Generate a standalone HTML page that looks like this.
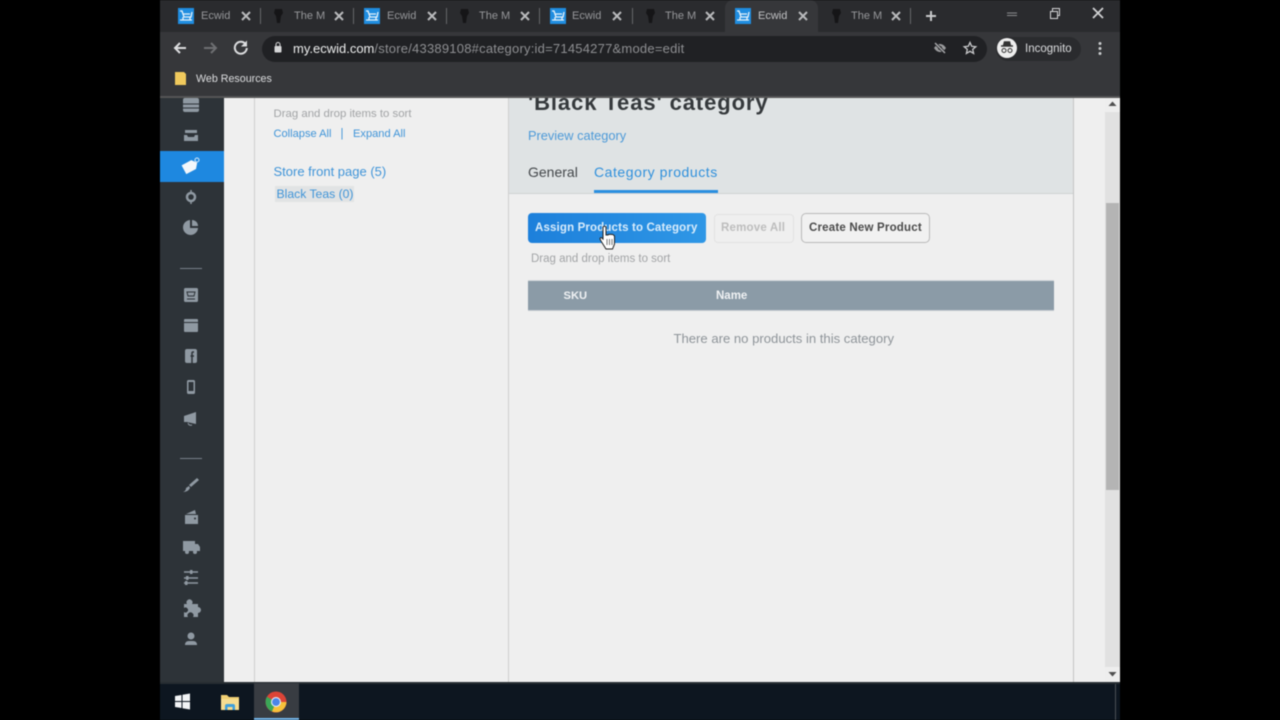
<!DOCTYPE html>
<html><head><meta charset="utf-8"><style>
html,body{margin:0;padding:0;background:#000;width:1280px;height:720px;overflow:hidden}
body{font-family:"Liberation Sans",sans-serif;position:relative}
div,span,svg{position:absolute}
.t{white-space:nowrap;line-height:1}
#all{left:0;top:0;width:1280px;height:720px;filter:blur(.4px)}
</style></head><body><div id="all">
<!-- chrome -->
<div style="left:160px;top:0;width:960px;height:32px;background:#2a2b2e"></div>
<div style="left:160px;top:32px;width:960px;height:64px;background:#36373a"></div>
<div style="left:160px;top:96px;width:960px;height:2px;background:#555"></div>
<div style="left:725px;top:0;width:93px;height:32px;background:#36373a;border-radius:8px 8px 0 0"></div>

<svg style="left:160px;top:0" width="960" height="96" viewBox="160 0 960 96">
<defs><g id="e"><rect x="-8" y="-8" width="16" height="16" fill="#1f8de0"/><path d="M-6-5h2l2 6h7l1-5M-3 1v3M4 1v3M-6 4h12M-3-2h7" stroke="#e6f2fb" stroke-width="1.3" fill="none"/></g>
<g id="m"><path d="M-4-7h7l1 4-2 3-1 7h-3l-1-7-2-3z" fill="#151517"/></g>
<path id="x" d="M-4-4L4 4M4-4L-4 4" stroke="#b8b9bb" stroke-width="2"/></defs>
<use href="#e" x="186" y="16"/><use href="#m" x="279" y="16"/><use href="#e" x="372" y="16"/><use href="#m" x="465" y="16"/><use href="#e" x="558" y="16"/><use href="#m" x="651" y="16"/><use href="#e" x="743" y="16"/><use href="#m" x="837" y="16"/>
<use href="#x" x="246" y="16"/><use href="#x" x="339" y="16"/><use href="#x" x="432" y="16"/><use href="#x" x="525" y="16"/><use href="#x" x="617" y="16"/><use href="#x" x="710" y="16"/><use href="#x" x="803" y="16"/><use href="#x" x="896" y="16"/>
<path d="M260.500 8v16M353.500 8v16M446.500 8v16M539.500 8v16M632.500 8v16M910.500 8v16" stroke="#66676a"/>
<path d="M926 16h10M931 11v10" stroke="#c8c9cb" stroke-width="2"/>
<path d="M1007 13h10M1007 15.500h10" stroke="#8a8b8d" stroke-width="1"/>
<path d="M1050.500 11.500h7v7h-7zM1052.500 11v-2.500h7v7H1057.500" stroke="#d5d6d7" fill="none"/>
<path d="M1093 8l10 10M1103 8l-10 10" stroke="#d0d1d2" stroke-width="1.800"/>
<path d="M186 48h-11M180 43l-5 5 5 5" stroke="#dcdddf" stroke-width="2" fill="none"/>
<path d="M204 48h11M211 43l5 5-5 5" stroke="#6e6f72" stroke-width="2" fill="none"/>
<path d="M245.500 44a6 6 0 1 0 1.300 4" stroke="#dcdddf" stroke-width="2" fill="none"/><path d="M247 40.500v6h-6z" fill="#dcdddf"/>
<rect x="262" y="36" width="725" height="26" rx="13" fill="#202124"/>
<rect x="274.500" y="46" width="7" height="6.500" rx="1" fill="#d5d6d7"/><path d="M276 46v-1.500a2 2 0 0 1 4 0V46" stroke="#d5d6d7" fill="none"/>
<path d="M934 48c2-3 4-4 6-4s4 1 6 4c-2 3-4 4-6 4s-4-1-6-4z" fill="#9a9b9d"/><circle cx="940" cy="48" r="2" fill="#202124"/><path d="M935 43l10 10" stroke="#202124" stroke-width="3"/><path d="M935 43l10 10" stroke="#aaabad" stroke-width="1.400"/>
<path d="M970 42.500l1.700 3.800 4.100.4-3.100 2.700.9 4-3.600-2.100-3.600 2.100.9-4-3.100-2.700 4.100-.4z" fill="none" stroke="#c8c9cb" stroke-width="1.300"/>
<rect x="996" y="37" width="85" height="24" rx="12" fill="#2a2b2e"/>
<circle cx="1007" cy="48" r="10" fill="#eeeeee"/><path d="M1001 46h12M1003.500 46l1-4h5l1 4" stroke="#333" stroke-width="1.500" fill="#333"/><circle cx="1004" cy="50.500" r="2" fill="none" stroke="#333"/><circle cx="1010" cy="50.500" r="2" fill="none" stroke="#333"/>
<circle cx="1100" cy="43.500" r="1.500" fill="#c8c9cb"/><circle cx="1100" cy="48.500" r="1.500" fill="#c8c9cb"/><circle cx="1100" cy="53.500" r="1.500" fill="#c8c9cb"/>
<path d="M175 72h9l2 2v11h-11z" fill="#f0c95c"/>
</svg>

<span class="t" style="left:201px;top:10.500px;font-size:11px;color:#96979a">Ecwid</span>
<span class="t" style="left:294px;top:10.500px;font-size:11px;color:#96979a">The M</span>
<span class="t" style="left:387px;top:10.500px;font-size:11px;color:#96979a">Ecwid</span>
<span class="t" style="left:479px;top:10.500px;font-size:11px;color:#96979a">The M</span>
<span class="t" style="left:572px;top:10.500px;font-size:11px;color:#96979a">Ecwid</span>
<span class="t" style="left:665px;top:10.500px;font-size:11px;color:#96979a">The M</span>
<span class="t" style="left:758px;top:10.500px;font-size:11px;color:#c0c1c3">Ecwid</span>
<span class="t" style="left:851px;top:10.500px;font-size:11px;color:#96979a">The M</span>
<span class="t" style="left:293px;top:42px;font-size:13px;color:#8e8f92"><span style="position:static;color:#eceded">my.ecwid.com</span><span style="position:static;letter-spacing:.22px">/store/43389108#category:id=71454277&amp;mode=edit</span></span>
<span class="t" style="left:1025px;top:43.500px;font-size:11.500px;color:#dcdddf">Incognito</span>
<span class="t" style="left:196px;top:73.500px;font-size:10.700px;color:#dcdddf">Web Resources</span>

<!-- sidebar -->
<div style="left:160px;top:98px;width:64px;height:584px;background:#2d3338"></div>
<div style="left:160px;top:151px;width:64px;height:31px;background:#1e88e0"></div>
<svg style="left:160px;top:98px" width="64" height="584" viewBox="160 98 64 584">
<g fill="#8f99a2">
<rect x="183" y="98" width="16" height="14" rx="2"/><path d="M183 104h16" stroke="#2d3338"/><path d="M183 108h16" stroke="#2d3338"/>
<path d="M185 130h12v3h-12zM184 135h3l1 2h6l1-2h3v6h-14z"/>
<circle cx="191" cy="197" r="4" fill="none" stroke="#8f99a2" stroke-width="2.500"/><path d="M191 190v3M191 201v3" stroke="#8f99a2" stroke-width="1.500"/>
<path d="M190 220a7.500 7.500 0 1 0 8 8h-8z"/><path d="M192 220a6 6 0 0 1 6 6h-6z"/>
<rect x="184" y="288" width="14" height="14" rx="1.500"/><path d="M187 292h8l-1 4h-6zM187 299h8" stroke="#2d3338" fill="none"/>
<rect x="184" y="319" width="14" height="13" rx="1"/><path d="M184 322.500h14" stroke="#2d3338"/>
<rect x="185" y="349" width="12" height="14" rx="2"/><path d="M192 363v-7h2M194 352h-1q-1 0-1 1v3h-1.500" stroke="#2d3338" stroke-width="1.500" fill="none"/>
<rect x="187" y="380" width="8" height="14" rx="1.500"/><rect x="188.500" y="382" width="5" height="9" fill="#2d3338"/>
<path d="M184 416l12-4v12l-9-2h-3z"/><path d="M188 423q1 3 4 2" stroke="#8f99a2" fill="none"/>
<path d="M197 478l2 2-8 7-2-2z"/><path d="M189 486l1 2q-2 4-7 4 3-1 3-4z" fill="#8f99a2"/>
<path d="M185 515h13v9h-13zM186 514l9-4 1 4z"/><circle cx="195" cy="518.500" r="1" fill="#2d3338"/>
<rect x="183" y="541" width="12" height="9"/><path d="M195 544h3l2 3v4h-17v-1h12z"/><circle cx="187" cy="552" r="2"/><circle cx="195" cy="552" r="2"/>
<path d="M184 572h14M184 578h14M184 583h14" stroke="#8f99a2" stroke-width="1.500"/><rect x="190" y="570" width="2.500" height="4"/><rect x="186" y="576" width="2.500" height="4"/><rect x="185" y="581" width="2.500" height="4"/>
<path d="M184 604h3a3 3 0 1 1 5 0h6v3a3 3 0 1 1 0 6v4h-5a3 3 0 1 0-5 0h-4v-5a2.500 2.500 0 1 0 0-4z"/>
<circle cx="191" cy="636" r="3.500"/><path d="M185 645q0-4 4-4h4q4 0 4 4z"/>
</g>
<path d="M180 268.500h22M180 458.500h22" stroke="#78818a"/>
<g transform="rotate(-28 191 166)"><path d="M183 161h11l4 5-4 5h-11z" fill="#f3f7fb"/></g><circle cx="197" cy="160" r="2" fill="none" stroke="#d7e8f8"/>
</svg>

<!-- content -->
<div style="left:224px;top:98px;width:881px;height:584px;background:#efefef"></div>
<div style="left:254px;top:98px;width:1px;height:584px;background:#cfcfcf"></div>
<div style="left:508px;top:98px;width:1px;height:584px;background:#cfcfcf"></div>
<div style="left:1073px;top:98px;width:1px;height:584px;background:#c4c4c4"></div>
<div style="left:509px;top:98px;width:564px;height:95px;background:#dfe3e4;border-bottom:1px solid #cfd2d3"></div>
<span class="t" style="left:528px;top:92px;font-size:22px;font-weight:bold;color:#35393c;letter-spacing:.9px">'Black Teas' category</span>
<div style="left:224px;top:96px;width:896px;height:2px;background:#555"></div>
<span class="t" style="left:528px;top:129.500px;font-size:12.800px;color:#4d9ad8">Preview category</span>
<span class="t" style="left:528px;top:165px;font-size:14px;color:#43474a">General</span>
<span class="t" style="left:594px;top:165px;font-size:14px;color:#2f90dc;letter-spacing:.55px">Category products</span>
<div style="left:594px;top:190px;width:124px;height:3px;background:#2a8fe0"></div>

<span class="t" style="left:273.500px;top:109px;font-size:11.400px;color:#a2a4a6">Drag and drop items to sort</span>
<span class="t" style="left:273.500px;top:129px;font-size:11.100px;color:#3f94d8">Collapse All</span>
<span class="t" style="left:340.500px;top:129px;font-size:11.500px;color:#3f94d8">|</span>
<span class="t" style="left:353px;top:129px;font-size:11.100px;color:#3f94d8">Expand All</span>
<span class="t" style="left:273.500px;top:165px;font-size:13px;color:#3f94d8">Store front page (5)</span>
<div style="left:275px;top:186px;width:79px;height:16px;background:#e1e3e4"></div>
<span class="t" style="left:276.500px;top:187.500px;font-size:12.200px;color:#3f94d8">Black Teas (0)</span>

<div style="left:528px;top:213px;width:178px;height:30px;border-radius:4px;background:linear-gradient(90deg,#1d80db,#2f97e6)"></div>
<span class="t" style="left:535px;top:223px;font-size:11.500px;font-weight:bold;color:#d9ecfb;letter-spacing:.15px">Assign Products to Category</span>
<div style="left:714px;top:214px;width:78px;height:27px;border:1px solid #e2e2e2;border-radius:4px"></div>
<span class="t" style="left:721px;top:223px;font-size:11.500px;font-weight:bold;color:#bdbdbd;letter-spacing:.2px">Remove All</span>
<div style="left:801px;top:213px;width:127px;height:28px;border:1px solid #b9b9b9;border-radius:5px;background:#f1f1f1"></div>
<span class="t" style="left:809px;top:223px;font-size:11.500px;font-weight:bold;color:#4a4a4a;letter-spacing:.2px">Create New Product</span>
<span class="t" style="left:531px;top:254px;font-size:11.500px;color:#a2a4a6">Drag and drop items to sort</span>
<div style="left:528px;top:281px;width:526px;height:29px;background:#8b9ba7;border-top:1px solid #d5d9dc;border-bottom:1px solid #c5cbd0;margin-top:-1px"></div>
<span class="t" style="left:563.500px;top:291px;font-size:11.200px;font-weight:bold;color:#f0f2f4">SKU</span>
<span class="t" style="left:716px;top:291px;font-size:11.500px;font-weight:bold;color:#f0f2f4">Name</span>
<span class="t" style="left:673.500px;top:332px;font-size:13.100px;color:#8e9499">There are no products in this category</span>

<svg style="left:597px;top:224px" width="22" height="28" viewBox="0 0 22 28"><path d="M6 3q1.500-1.500 3 0v8l2 0q0-1 1.500-.5.500-.5 2 0 1-.5 2 .5l1 1v8l-2 5H9l-5-8-1-2q0-2 2-1l1 1z" fill="#fff" stroke="#222" stroke-width="1"/><path d="M10 15v6M12.500 15v6M15 15v6" stroke="#555" stroke-width=".8"/></svg>

<!-- scrollbar -->
<div style="left:1105px;top:98px;width:15px;height:584px;background:#e1e1e1"></div>
<div style="left:1105px;top:98px;width:15px;height:14px;background:#eeeeee"></div>
<div style="left:1105px;top:667px;width:15px;height:15px;background:#eeeeee"></div>
<div style="left:1106px;top:203px;width:13px;height:287px;background:#b4b4b4"></div>
<svg style="left:1105px;top:98px" width="15" height="584" viewBox="0 0 15 584"><path d="M7.500 3.500l4 4.500h-8z" fill="#505050"/><path d="M3.500 574h8l-4 4.500z" fill="#505050"/></svg>

<!-- taskbar -->
<div style="left:160px;top:682px;width:960px;height:38px;background:#0d1620"></div>
<div style="left:160px;top:682px;width:960px;height:2px;background:#262d32"></div>
<div style="left:254px;top:683px;width:45px;height:37px;background:#383c42"></div>
<div style="left:254px;top:718px;width:45px;height:2px;background:#76b9ed"></div>
<div style="left:1115px;top:684px;width:1px;height:36px;background:#4a5056"></div>
<svg style="left:160px;top:682px" width="960" height="38" viewBox="160 682 960 38">
<path d="M175 696l6.500-1v6h-6.500zM182.500 694.800l7.500-1.300v7.500h-7.500zM175 702h6.500v6l-6.500-1zM182.500 702h7.500v7.500l-7.500-1.300z" fill="#f2f4f6"/>
<path d="M221 695h6l2 2h10v13h-18z" fill="#f0cf73"/><path d="M221 699h18v11h-18z" fill="#f6dd91"/><path d="M225 710v-4q0-2 2-2h6q2 0 2 2v4h-2.500v-3h-5v3z" fill="#3fa0dc"/>
<circle cx="276" cy="702" r="10.500" fill="#dc4437"/><path d="M276 702l-9.100-5.300A10.500 10.500 0 0 0 272 711.500z" fill="#3aa757"/><path d="M276 702h10.500a10.500 10.500 0 0 1-14.500 9.500z" fill="#f6c13a"/><circle cx="276" cy="702" r="5" fill="#e8eef6"/><circle cx="276" cy="702" r="3.900" fill="#4a85e8"/>
</svg>
</div></body></html>
